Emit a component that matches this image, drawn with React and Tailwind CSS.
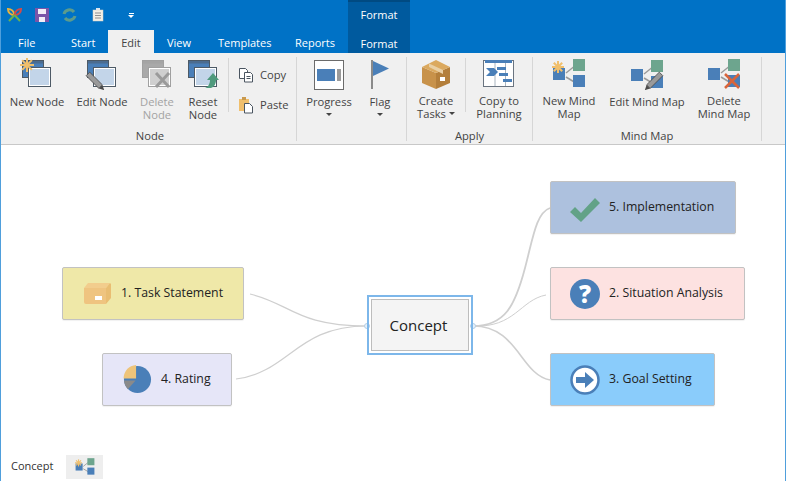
const font = { fontFamily: '"Open Sans", "Noto Sans", sans-serif' };

// ribbon icons, all drawn in a 36x32 box
const Squares = ({ back = "#4a7fb8", front = "#c3d5e9", edge = "#4d5a66" }) => (
  <>
    <rect x="3.5" y="2.5" width="21" height="17" fill={back} stroke={edge} />
    <rect x="3.5" y="2.5" width="21" height="3" fill={edge} opacity="0.5" />
    <rect x="9.5" y="9.5" width="22" height="19" fill="#fff" stroke={edge} />
    <rect x="11" y="11" width="19" height="16" fill={front} />
  </>
);

const Sun = ({ x, y, r = 6 }) => (
  <g stroke="#f0bf6c" strokeWidth="2" transform={`translate(${x} ${y})`}>
    <line x1={-r} y1="0" x2={r} y2="0" />
    <line x1="0" y1={-r} x2="0" y2={r} />
    <line x1={-r * 0.7} y1={-r * 0.7} x2={r * 0.7} y2={r * 0.7} />
    <line x1={-r * 0.7} y1={r * 0.7} x2={r * 0.7} y2={-r * 0.7} />
  </g>
);

const Pencil = ({ x, y, angle = -45 }) => (
  <g transform={`translate(${x} ${y}) rotate(${angle})`}>
    <rect x="-2.5" y="-10" width="5" height="18" fill="#9a9a9a" stroke="#4a4a4a" strokeWidth="0.8" />
    <path d="M-2.5 8 L0 13 L2.5 8 Z" fill="#4a4a4a" />
  </g>
);

const NewNodeIcon = () => (
  <svg width="36" height="32" viewBox="0 0 36 32">
    <Squares />
    <Sun x={8} y={7} r={7} />
  </svg>
);

const EditNodeIcon = () => (
  <svg width="36" height="32" viewBox="0 0 36 32">
    <Squares />
    <Pencil x={11} y={23} />
  </svg>
);

const DeleteNodeIcon = () => (
  <svg width="36" height="32" viewBox="0 0 36 32">
    <Squares back="#a9a9a9" front="#cfcfcf" edge="#a0a0a0" />
    <path d="M17 15 L30 29 M30 15 L17 29" stroke="#9a9a9a" strokeWidth="3" />
  </svg>
);

const ResetNodeIcon = () => (
  <svg width="36" height="32" viewBox="0 0 36 32">
    <Squares />
    <path d="M28 15 L34 22 H31 C31 26 29 29 26 30 H20 C23 29 25 26 25 22 H22 Z" fill="#4f9a7d" />
  </svg>
);

const CopyIcon = () => (
  <svg width="16" height="16" viewBox="0 0 16 16" fill="#fff" stroke="#4a5560">
    <path d="M1.5 1.5 H7.5 L9.5 3.5 V11.5 H1.5 Z" />
    <path d="M6.5 5.5 H12.5 L14.5 7.5 V15 H6.5 Z" />
    <path d="M8.5 9.5 H12.5 M8.5 11.5 H12.5" />
  </svg>
);

const PasteIcon = () => (
  <svg width="16" height="18" viewBox="0 0 16 18">
    <rect x="1" y="3" width="10" height="12" fill="#f0bf6c" />
    <rect x="4" y="1" width="4" height="3" fill="#c99a4e" />
    <path d="M6.5 7.5 H11.5 L14.5 10.5 V17 H6.5 Z" fill="#fff" stroke="#4a5560" />
  </svg>
);

const ProgressIcon = () => (
  <svg width="30" height="30" viewBox="0 0 30 30">
    <rect x="0.5" y="0.5" width="29" height="29" fill="#fff" stroke="#6b6b6b" />
    <rect x="3" y="9" width="24" height="12" fill="#9a9a9a" />
    <rect x="3" y="9" width="18" height="12" fill="#4a7fb8" />
    <rect x="21" y="9" width="2" height="12" fill="#fff" />
  </svg>
);

const FlagIcon = () => (
  <svg width="20" height="30" viewBox="0 0 20 30">
    <rect x="1" y="0" width="2" height="29" fill="#8a8a8a" />
    <path d="M3 1 L19 8.5 L3 16 Z" fill="#4a7fb8" />
  </svg>
);

const BoxIcon = () => (
  <svg width="30" height="30" viewBox="0 0 30 30">
    <path d="M1 8 L15 14 V30 L1 24 Z" fill="#c8924a" />
    <path d="M15 14 L29 8 V24 L15 30 Z" fill="#b47f3b" />
    <path d="M1 8 L15 1 L29 8 L15 14 Z" fill="#dba95f" />
    <path d="M8 4.5 L22 11 L22 15 L8 8 Z" fill="#e9cfa4" />
    <rect x="19" y="18" width="5" height="4" fill="#fff" />
  </svg>
);

// flat, faded box on the Task Statement node
const TaskBoxIcon = () => (
  <svg width="27" height="21" viewBox="0 0 27 21">
    <path d="M4 0 H26 L22 5 H0 Z" fill="#f2cd8d" />
    <path d="M22 5 L26 0 L27 1 V15 L22 21 Z" fill="#e9bd72" />
    <path d="M0 5 H22 V21 H2 Q0 21 0 19 Z" fill="#efc480" />
    <rect x="11" y="13" width="7" height="4" fill="#fff" />
  </svg>
);

const PlanningIcon = () => (
  <svg width="32" height="30" viewBox="0 0 32 30">
    <rect x="0.5" y="1.5" width="30" height="26" fill="#fff" stroke="#6a7480" />
    <rect x="2" y="1" width="27" height="3" fill="#4a7fb8" />
    <path d="M22.5 4 V27 M12 4 V27" stroke="#a9b4bf" />
    <path d="M3 9 H11 L15 13 L11 17 H3 L7 13 Z" fill="#4a7fb8" />
    <rect x="14" y="8" width="9" height="3" fill="#4a7fb8" />
    <rect x="16" y="14" width="9" height="3" fill="#4a7fb8" />
    <rect x="20" y="20" width="9" height="3" fill="#4a7fb8" />
  </svg>
);

const MapBase = () => (
  <>
    <line x1="14" y1="14" x2="24" y2="6" stroke="#9a9a9a" strokeWidth="1.5" />
    <line x1="14" y1="18" x2="24" y2="24" stroke="#9a9a9a" strokeWidth="1.5" />
    <rect x="21" y="0" width="12" height="12" fill="#6da58e" />
    <rect x="21" y="16" width="12" height="12" fill="#4a7fb8" />
    <rect x="1" y="9" width="12" height="12" fill="#4a7fb8" />
  </>
);

const NewMapIcon = () => (
  <svg width="34" height="30" viewBox="0 0 34 30">
    <MapBase />
    <Sun x={6} y={8} />
  </svg>
);

const EditMapIcon = () => (
  <svg width="34" height="30" viewBox="0 0 34 30">
    <MapBase />
    <Pencil x={24} y={21} angle={45} />
  </svg>
);

const DeleteMapIcon = () => (
  <svg width="34" height="30" viewBox="0 0 34 30">
    <MapBase />
    <path d="M18 15 L32 29 M32 15 L18 29" stroke="#d9653b" strokeWidth="2.5" />
  </svg>
);

const Caret = () => (
  <span className="inline-block w-0 h-0 border-x-[3px] border-x-transparent border-t-[3px] border-t-[#444]" />
);

const RibbonButton = ({ icon, lines, width, disabled, caretLine }) => (
  <div
    className={`flex flex-col items-center shrink-0 text-[11.2px] leading-[13px] ${disabled ? "text-[#a3a3a3]" : "text-[#444]"}`}
    style={{ width }}
  >
    <div className="h-[32px] flex items-end justify-center mb-[5px]">{icon}</div>
    {lines.map((line) => (
      <div key={line} className="whitespace-nowrap flex items-center gap-[3px]">
        {line}
        {line === "Tasks" && <Caret />}
      </div>
    ))}
    {caretLine && (
      <div className="h-[13px] flex items-center">
        <Caret />
      </div>
    )}
  </div>
);

const Sep = ({ className = "" }) => <div className={`w-px bg-[#d6d6d6] shrink-0 ${className}`} />;

const Group = ({ label, width, children }) => (
  <div className="flex flex-col shrink-0" style={{ width }}>
    <div className="flex h-[67px] pt-[5px]">{children}</div>
    <div className="text-center text-[11.2px] leading-[13px] text-[#444] mt-[9px]">{label}</div>
  </div>
);

const Ribbon = () => (
  <div className="h-[92px] bg-[#f0f0f0] border-b border-[#c8c8c8] flex items-stretch pl-[3px] shrink-0">
    <Group label="Node" width={292}>
      <RibbonButton width={66} icon={<NewNodeIcon />} lines={["New Node"]} />
      <RibbonButton width={64} icon={<EditNodeIcon />} lines={["Edit Node"]} />
      <RibbonButton width={46} icon={<DeleteNodeIcon />} lines={["Delete", "Node"]} disabled />
      <RibbonButton width={46} icon={<ResetNodeIcon />} lines={["Reset", "Node"]} />
      <Sep className="ml-[2px] h-[54px]" />
      <div className="flex flex-col pl-[9px] pt-[8px] gap-[12px] text-[11.2px] text-[#444]">
        <div className="flex items-center gap-[6px] h-[18px]"><CopyIcon />Copy</div>
        <div className="flex items-center gap-[6px] h-[18px]"><PasteIcon />Paste</div>
      </div>
    </Group>
    <Sep className="h-[84px] mt-[4px]" />
    <div className="flex w-[109px] shrink-0 pt-[5px] pl-[7px]">
      <RibbonButton width={50} icon={<ProgressIcon />} lines={["Progress"]} caretLine />
      <RibbonButton width={52} icon={<FlagIcon />} lines={["Flag"]} caretLine />
    </div>
    <Sep className="h-[84px] mt-[4px]" />
    <Group label="Apply" width={125}>
      <RibbonButton width={58} icon={<BoxIcon />} lines={["Create", "Tasks"]} />
      <Sep className="h-[54px]" />
      <RibbonButton width={66} icon={<PlanningIcon />} lines={["Copy to", "Planning"]} />
    </Group>
    <Sep className="h-[84px] mt-[4px]" />
    <Group label="Mind Map" width={228}>
      <RibbonButton width={72} icon={<NewMapIcon />} lines={["New Mind", "Map"]} />
      <RibbonButton width={84} icon={<EditMapIcon />} lines={["Edit Mind Map"]} />
      <RibbonButton width={70} icon={<DeleteMapIcon />} lines={["Delete", "Mind Map"]} />
    </Group>
    <Sep className="h-[84px] mt-[4px]" />
  </div>
);

const QuickBar = () => (
  <div className="flex items-center h-[30px] pl-[6px] gap-[13px]">
    <svg width="15" height="16" viewBox="0 0 15 16" fill="none" strokeWidth="2">
      <path d="M7.5 8 C3 8 1 5 1 2 C4 2 7 4 7.5 8Z" stroke="#e8b33f" />
      <path d="M7.5 8 C12 8 14 5 14 2 C11 2 8 4 7.5 8Z" stroke="#d34a4a" />
      <path d="M7.5 8 L2 14" stroke="#6cb04e" />
      <path d="M7.5 8 L13 14" stroke="#6cb04e" />
    </svg>
    <svg width="14" height="14" viewBox="0 0 14 14">
      <rect width="14" height="14" fill="#7a55a8" />
      <rect x="3" y="1" width="8" height="5" fill="#f2eef7" />
      <rect x="4" y="9" width="6" height="5" fill="#f2eef7" />
    </svg>
    <svg width="15" height="16" viewBox="0 0 15 16" fill="none" stroke="#5c9b8c" strokeWidth="3">
      <path d="M2 7 C3 3 9 1 12 5" />
      <path d="M13 9 C12 13 6 15 3 11" />
    </svg>
    <svg width="12" height="14" viewBox="0 0 12 14" className="ml-[2px]">
      <rect x="1" y="2" width="10" height="11" fill="#f3efe6" stroke="#d8d3c6" strokeWidth="0.5" />
      <rect x="4" y="0" width="4" height="2" fill="#dce6ef" />
      <path d="M3 5 H9 M3 7.5 H9 M3 10 H9" stroke="#8f8f8f" />
    </svg>
    <div className="ml-[11px] flex flex-col items-center gap-[1px]">
      <div className="w-[5px] h-px bg-white" />
      <span className="inline-block w-0 h-0 border-x-[3px] border-x-transparent border-t-[3px] border-t-white" />
    </div>
  </div>
);

const TabRow = () => (
  <div className="flex h-[23px] text-[11px] leading-[25px] text-white">
    <div className="w-[70px] pl-[17px]">File</div>
    <div className="w-[37px]">Start</div>
    <div className="w-[46px] bg-[#f0f0f0] text-[#444] text-center">Edit</div>
    <div className="w-[64px] pl-[13px]">View</div>
    <div className="w-[77px]">Templates</div>
    <div className="w-[53px]">Reports</div>
  </div>
);

const Node = ({ className, icon, label }) => (
  <div className={`absolute h-[53px] rounded-[2px] border border-[#c2c2c2] flex items-center shadow-[0_1px_1px_rgba(0,0,0,0.06)] text-[12.3px] text-[#222] ${className}`}>
    {icon}
    <span className="whitespace-nowrap">{label}</span>
  </div>
);

const Links = () => (
  <svg width="786" height="336" viewBox="0 145 786 336" className="absolute -left-px top-0" fill="none" stroke="#cfcfcf">
    <path d="M250 294 C290 303 296 326 367 326" strokeWidth="1.2" />
    <path d="M236 379 C290 372 296 326 367 326" strokeWidth="1.2" />
    <path d="M473 326 C505 326 515 306 525 268 C533 238 536 213 550 208" strokeWidth="1.8" />
    <path d="M473 326 C515 328 520 300 546 295" strokeWidth="1" />
    <path d="M473 326 C518 326 520 374 550 380" strokeWidth="1.6" />
    <circle cx="367" cy="326" r="2.5" fill="#e8f1f9" stroke="#b5cfe6" />
    <circle cx="473" cy="326" r="2.5" fill="#e8f1f9" stroke="#b5cfe6" />
  </svg>
);

const Canvas = () => (
  <div className="relative flex-1 bg-white">
    <Links />
    <Node
      className="left-[61px] top-[122px] w-[182px] bg-[#efe8a8] pl-[21px] gap-[10px]"
      label="1. Task Statement"
      icon={<TaskBoxIcon />}
    />
    <Node
      className="left-[101px] top-[208px] w-[130px] bg-[#e6e6f8] pl-[20px] gap-[9px]"
      label="4. Rating"
      icon={
        <svg width="29" height="29" viewBox="0 0 30 30">
          <circle cx="15" cy="15" r="14" fill="#4a7fb8" />
          <path d="M13.5 14 V0 C6 0.5 1 6 0.5 14 Z" fill="#eec47a" />
          <path d="M13 16 H1 C1.5 20 3 22.5 5 25 Z" fill="#8a8a8a" />
        </svg>
      }
    />
    <div className="absolute left-[366px] top-[150px] w-[106px] h-[60px] border-2 border-[#7db7ea] p-[2px]">
      <div className="w-full h-full border border-[#bdbdbd] bg-[#f4f4f4] flex items-center justify-center pr-[3px] text-[15px] text-[#222]">
        Concept
      </div>
    </div>
    <Node
      className="left-[549px] top-[36px] w-[186px] bg-[#adc1de] pl-[19px] gap-[9px]"
      label="5. Implementation"
      icon={
        <svg width="30" height="26" viewBox="0 0 30 26" className="mt-[5px]">
          <path d="M0 15 L5 10 L11 16 L25 1 L30 6 L11 25 Z" fill="#62a287" />
        </svg>
      }
    />
    <Node
      className="left-[549px] top-[122px] w-[195px] bg-[#fde2e1] pl-[19px] gap-[9px]"
      label="2. Situation Analysis"
      icon={
        <div className="w-[30px] h-[30px] rounded-full bg-[#4a7fb8] flex items-center justify-center text-white text-[24px] leading-none font-extrabold">
          ?
        </div>
      }
    />
    <Node
      className="left-[549px] top-[208px] w-[165px] bg-[#8accfb] pl-[19px] gap-[9px]"
      label="3. Goal Setting"
      icon={
        <svg width="30" height="30" viewBox="0 0 30 30">
          <circle cx="15" cy="15" r="13.5" fill="#fff" stroke="#4a7fb8" strokeWidth="2.5" />
          <path d="M6 12 H15 V7 L24 15 L15 23 V18 H6 Z" fill="#4a7fb8" />
        </svg>
      }
    />
  </div>
);

export default function App() {
  return (
    <div className="w-[786px] h-[481px] flex flex-col overflow-hidden bg-white border-x border-[#4f9fdc]" style={font}>
      <div className="relative h-[53px] bg-[#0072c6] shrink-0">
        <QuickBar />
        <TabRow />
        <div className="absolute left-[347px] top-0 w-[62px] h-[53px] bg-[#005a9e] border-t-[2px] border-[#004a82] text-[11px] text-white text-center">
          <div className="leading-[26px]">Format</div>
          <div className="leading-[32px]">Format</div>
        </div>
      </div>
      <Ribbon />
      <Canvas />
      <div className="h-[27px] flex items-center pl-[10px] pb-[2px] text-[11px] text-[#333] bg-white shrink-0">
        <span className="w-[55px] pb-[1px]">Concept</span>
        <div className="w-[37px] h-[24px] bg-[#eeeeee] flex items-center justify-center">
          <svg width="20" height="18" viewBox="0 0 34 30">
            <MapBase />
            <Sun x={6} y={8} />
          </svg>
        </div>
      </div>
    </div>
  );
}
